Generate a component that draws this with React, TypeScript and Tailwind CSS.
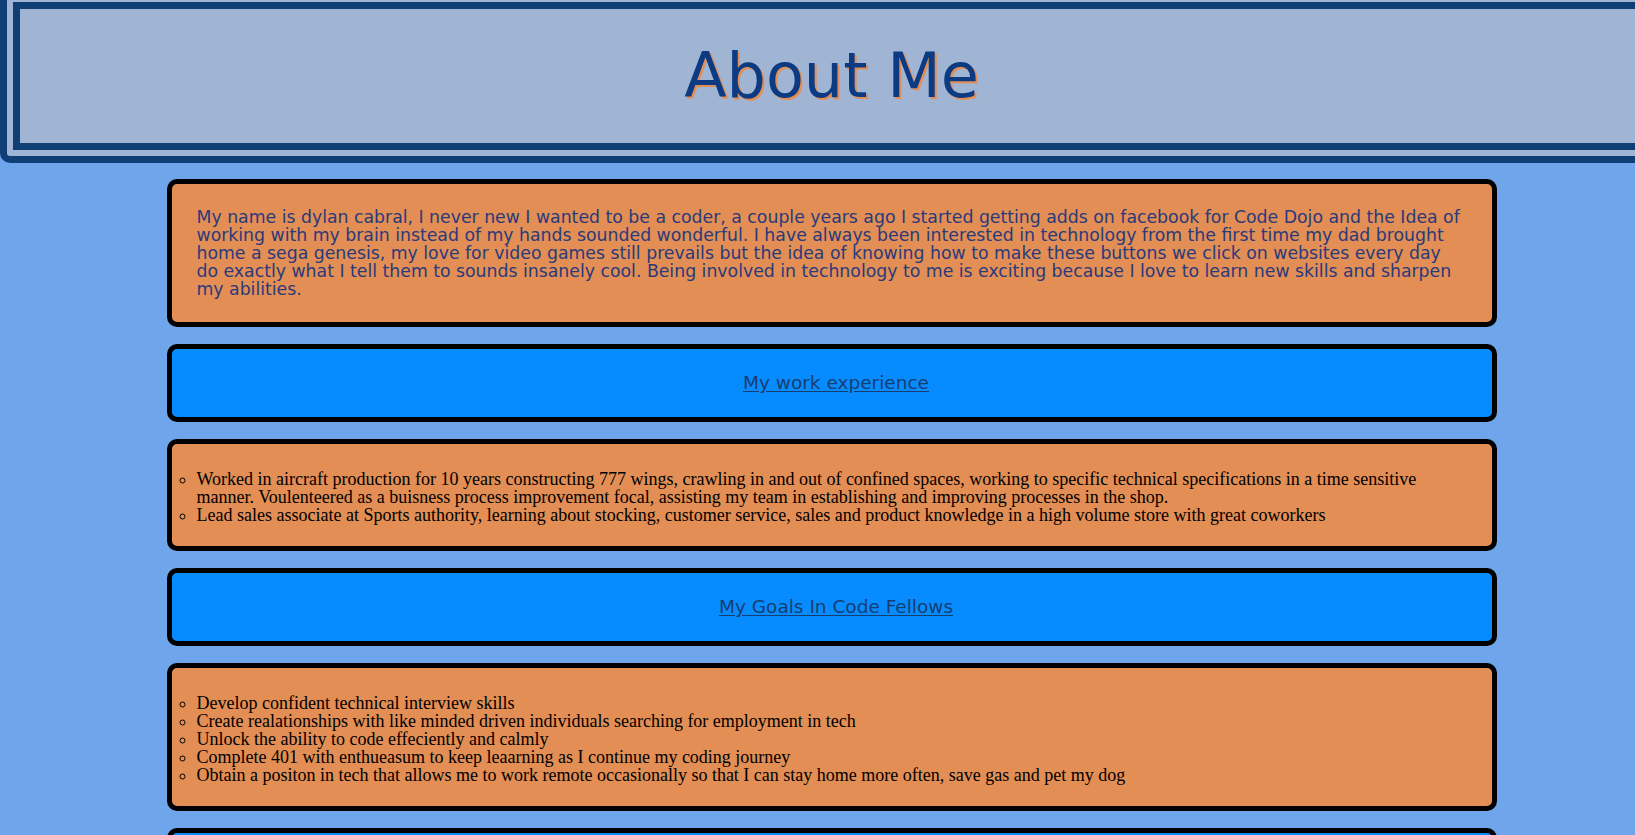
import React from "react";

const workItems = [
  "Worked in aircraft production for 10 years constructing 777 wings, crawling in and out of confined spaces, working to specific technical specifications in a time sensitive manner. Voulenteered as a buisness process improvement focal, assisting my team in establishing and improving processes in the shop.",
  "Lead sales associate at Sports authority, learning about stocking, customer service, sales and product knowledge in a high volume store with great coworkers",
];

const goals = [
  "Develop confident technical interview skills",
  "Create realationships with like minded driven individuals searching for employment in tech",
  "Unlock the ability to code effeciently and calmly",
  "Complete 401 with enthueasum to keep leaarning as I continue my coding journey",
  "Obtain a positon in tech that allows me to work remote occasionally so that I can stay home more often, save gas and pet my dog",
];

const LinkBox = ({ label }: { label: string }) => (
  <div className="bg-[#068cfe] border-[5px] border-black rounded-[10px] py-6 pl-[9px] text-center leading-[20px]">
    <a
      href="#"
      className="text-[18.5px] leading-[20px] text-[#173d70] underline underline-offset-2 font-['DejaVu_Sans',sans-serif]"
    >
      {label}
    </a>
  </div>
);

const ListBox = ({ items }: { items: string[] }) => (
  <div className="bg-[#e38e55] border-[5px] border-black rounded-[10px] pt-[26px] pb-[22px] px-[25px]">
    <ul className="list-[circle] pl-0 text-[18px] leading-[18px] text-black font-['Liberation_Serif',serif]">
      {items.map((item) => (
        <li key={item}>{item}</li>
      ))}
    </ul>
  </div>
);

const App = () => {
  return (
    <div className="min-h-screen w-full overflow-hidden bg-[#6fa5eb]">
      <div className="w-[1663px] pb-10">
        {/* Header */}
        <header className="-mt-[11px] bg-[#a0b5d3] border-[20px] border-double border-[#0f3f75] rounded-[10px] h-[174px] flex items-center justify-center">
          <h1 className="text-[62px] leading-[72px] text-[#0c3b84] font-['DejaVu_Sans',sans-serif] [text-shadow:2px_2px_0_#e38e55]">
            About Me
          </h1>
        </header>

        {/* Content */}
        <main className="w-[1330px] mx-auto mt-4 flex flex-col gap-[17px]">
          <div className="bg-[#e38e55] border-[5px] border-black rounded-[10px] py-6 px-[25px]">
            <p className="text-[17.3px] leading-[18px] text-[#2a3a7a] font-['DejaVu_Sans',sans-serif]">
              My name is dylan cabral, I never new I wanted to be a coder, a couple years ago I started getting adds on facebook for Code Dojo and the Idea of working with my brain instead of my hands sounded wonderful. I have always been interested in technology from the first time my dad brought home a sega genesis, my love for video games still prevails but the idea of knowing how to make these buttons we click on websites every day do exactly what I tell them to sounds insanely cool. Being involved in technology to me is exciting because I love to learn new skills and sharpen my abilities.
            </p>
          </div>

          <LinkBox label="My work experience" />
          <ListBox items={workItems} />

          <LinkBox label="My Goals In Code Fellows" />
          <ListBox items={goals} />

          <LinkBox label="My Projects" />
        </main>
      </div>
    </div>
  );
};

export default App;
